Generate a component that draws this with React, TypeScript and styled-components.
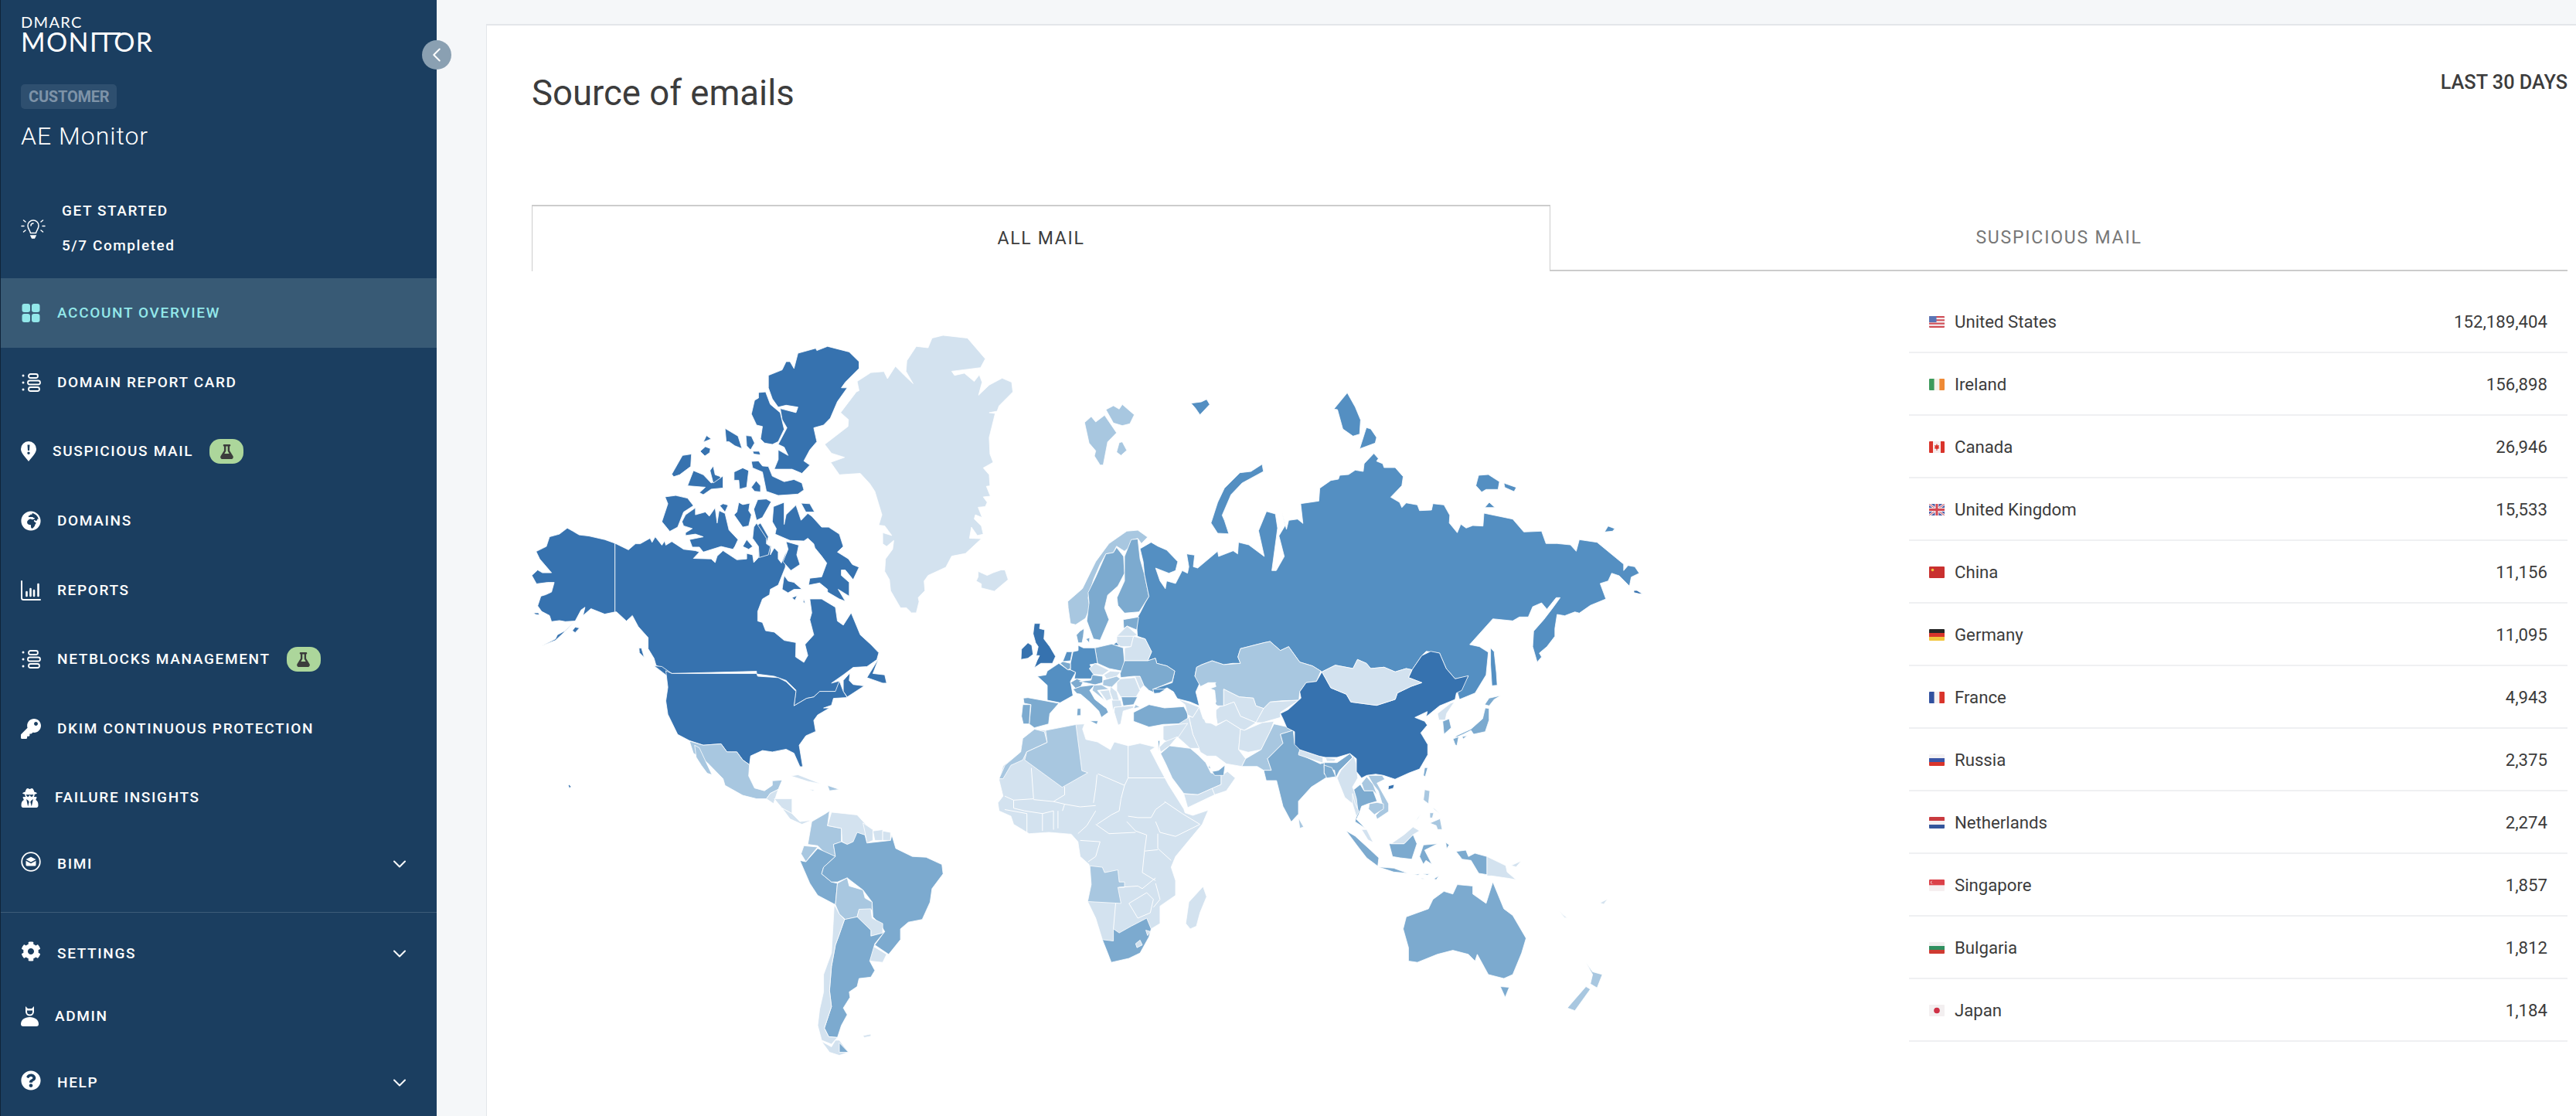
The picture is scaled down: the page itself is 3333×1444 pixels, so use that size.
import React from "react";
import styled, { createGlobalStyle } from "styled-components";
import { FaGlobeAfrica, FaKey, FaUserSecret, FaCog, FaQuestionCircle, FaFlask } from "react-icons/fa";
import { ChevronDown, ChevronLeft } from "lucide-react";

const GlobalStyle = createGlobalStyle`
  html, body { margin: 0; padding: 0; background: #f5f7f9; overflow: hidden; }
  * { box-sizing: border-box; }
  body { font-family: Roboto, "Liberation Sans", sans-serif; }
`;

const Page = styled.div`
  display: flex;
  width: 3333px;
  height: 1444px;
  overflow: hidden;
`;

const Sidebar = styled.aside`
  position: relative;
  flex: 0 0 565px;
  height: 1444px;
  background: #1b3e60;
  border-left: 1px solid #10243a;
  color: #fff;
`;

const LogoBlock = styled.div`
  padding: 21px 0 0 26px;
  height: 109px;
  font-family: Lato, sans-serif;
`;
const LogoTop = styled.div`
  font-size: 20px;
  line-height: 14px;
  letter-spacing: 1.3px;
  font-weight: 400;
`;
const LogoBottom = styled.div`
  position: relative;
  width: max-content;
  margin-top: 6px;
  font-size: 34px;
  line-height: 26px;
  letter-spacing: 1.4px;
  font-weight: 400;
  &::after {
    content: "";
    position: absolute;
    left: 93px;
    top: 1px;
    width: 36px;
    height: 3px;
    background: #fff;
  }
`;

const Collapse = styled.button`
  position: absolute;
  left: 545px;
  top: 52px;
  width: 38px;
  height: 38px;
  border: 0;
  padding: 0;
  border-radius: 50%;
  background: #8aa0b2;
  color: #fff;
  display: flex;
  align-items: center;
  justify-content: center;
  z-index: 2;
`;

const RoleBadge = styled.div`
  width: max-content;
  margin-left: 26px;
  height: 32px;
  padding: 0 10px;
  border-radius: 5px;
  background: #2e4f6f;
  color: #7e93a8;
  font-size: 20px;
  line-height: 32px;
  font-weight: 700;
  letter-spacing: -0.2px;
`;
const Account = styled.div`
  margin: 14px 0 0 26px;
  height: 43px;
  font-size: 32px;
  line-height: 43px;
  font-weight: 300;
  letter-spacing: 1px;
`;

const Started = styled.div`
  display: flex;
  align-items: center;
  gap: 21px;
  height: 129px;
  margin-top: 33px;
  padding-left: 26px;
`;
const StartedText = styled.div`
  display: flex;
  flex-direction: column;
  gap: 25px;
  font-size: 19px;
  line-height: 20px;
  font-weight: 500;
  letter-spacing: 1.55px;
`;

const NavItem = styled.div<{ $h?: number; $active?: boolean }>`
  display: flex;
  align-items: center;
  gap: 21px;
  height: ${(p) => p.$h ?? 89.6}px;
  padding: 0 34px 0 26px;
  background: ${(p) => (p.$active ? "#385a75" : "transparent")};
  color: ${(p) => (p.$active ? "#93e8ea" : "#fff")};
`;
const IconBox = styled.span<{ $w: number; $lift?: number }>`
  flex: 0 0 ${(p) => p.$w}px;
  width: ${(p) => p.$w}px;
  height: 26px;
  display: flex;
  align-items: center;
  justify-content: center;
  transform: translateY(${(p) => -(p.$lift ?? 0)}px);
  svg { display: block; }
`;
const NavLabel = styled.span`
  font-size: 19px;
  line-height: 24px;
  font-weight: 500;
  letter-spacing: 1.65px;
  white-space: nowrap;
`;
const Beta = styled.span`
  width: 44px;
  height: 32px;
  border-radius: 14px;
  background: #acd69b;
  color: #3c3c3c;
  display: flex;
  align-items: center;
  justify-content: center;
`;
const Chevron = styled.span`
  margin-left: auto;
  display: flex;
`;
const SideDivider = styled.hr`
  margin: 21px 0 13px;
  border: 0;
  border-top: 1px solid #3d5c78;
`;

const Main = styled.main`
  flex: 1;
  padding: 31px 0 0 64px;
  min-width: 0;
`;
const Card = styled.section`
  height: 1413px;
  background: #fff;
  border-left: 1px solid #e3e6ea;
  border-top: 2px solid #e3e6ea;
  padding: 0 11px 0 58px;
  overflow: hidden;
`;
const CardHead = styled.header`
  display: flex;
  justify-content: space-between;
  align-items: flex-start;
  height: 232px;
  color: #3c3c3c;
`;
const Title = styled.h1`
  margin: 60px 0 0;
  font-size: 45.5px;
  line-height: 56px;
  font-weight: 400;
`;
const Range = styled.div`
  margin-top: 59px;
  font-size: 25.3px;
  line-height: 30px;
  font-weight: 500;
`;
const Tabs = styled.div`
  display: flex;
  height: 86px;
`;
const Tab = styled.div<{ $active?: boolean }>`
  flex: ${(p) => (p.$active ? "0 0 1318px" : "1")};
  display: flex;
  align-items: center;
  justify-content: center;
  padding-bottom: ${(p) => (p.$active ? 2 : 0)}px;
  font-size: 23px;
  letter-spacing: ${(p) => (p.$active ? 1.7 : 1.8)}px;
  color: ${(p) => (p.$active ? "#3c3c3c" : "#777")};
  border-bottom: ${(p) => (p.$active ? "0" : "2px solid #ccc")};
  ${(p) => (p.$active ? "border: 1px solid #ccc; border-top-width: 2px; border-bottom: 0;" : "")}
`;
const Body = styled.div`
  display: flex;
  align-items: flex-start;
`;
const MapSvg = styled.svg`
  flex: 0 0 1782px;
  width: 1782px;
  height: 1060px;
`;
const List = styled.ul`
  flex: 1;
  list-style: none;
  margin: 25px 0 0;
  padding: 0;
`;
const Row = styled.li`
  display: flex;
  align-items: center;
  height: 81px;
  padding: 1px 26px 0;
  border-bottom: 2px solid #eff0f2;
  color: #3c3c3c;
  font-size: 22.2px;
`;
const RowName = styled.span`
  margin-left: 13px;
  flex: 1;
`;

/* ---------- icons ---------- */
const Bulb = () => (
  <svg width="32" height="26" viewBox="0 0 32 26" fill="none" stroke="#fff" strokeWidth="1.5" strokeLinecap="round">
    <path d="M12.5 18.5 C11.5 14.5 9 13 9 9 A7 7 0 0 1 23 9 C23 13 20.5 14.5 19.5 18.5 Z" />
    <path d="M13 9 A3 3 0 0 1 16 6" />
    <path d="M13 22 h6 l-1.5 3 h-3 Z" fill="#fff" />
    <path d="M1 9.5 h3 M28 9.5 h3 M3.5 2 l2.5 2 M28.500 2 l-2.500 2 M3.500 17 l2.500 -2 M28.500 17 l-2.500 -2" />
  </svg>
);
const Grid = () => (
  <svg width="24" height="24" viewBox="0 0 24 24" fill="currentColor">
    <rect x="0.500" y="0" width="10.500" height="11" rx="3" />
    <rect x="13" y="0" width="10.500" height="11" rx="3" />
    <rect x="0.500" y="13" width="10.500" height="11" rx="3" />
    <rect x="13" y="13" width="10.500" height="11" rx="3" />
  </svg>
);
const Stack = () => (
  <svg width="25" height="24" viewBox="0 0 25 24" fill="none" stroke="#fff" strokeWidth="1.800">
    <circle cx="2" cy="3" r="1.500" fill="#fff" stroke="none" />
    <circle cx="2" cy="12" r="1.500" fill="#fff" stroke="none" />
    <circle cx="2" cy="21" r="1.500" fill="#fff" stroke="none" />
    <rect x="9" y="1" width="12" height="5" rx="2.500" />
    <rect x="8" y="9.500" width="16" height="5" rx="2.500" />
    <rect x="9" y="18" width="14" height="5" rx="2.500" />
  </svg>
);
const Pin = () => (
  <svg width="20" height="26" viewBox="0 0 20 26">
    <path fillRule="evenodd" fill="#fff" d="M10 0 A10 10 0 0 1 20 10 C20 15 14 21 10 26 C6 21 0 15 0 10 A10 10 0 0 1 10 0 Z M8.500 4.500 L9 12 H11 L11.500 4.500 Z M10 13.500 A1.700 1.700 0 1 0 10 16.900 A1.700 1.700 0 1 0 10 13.500 Z" />
  </svg>
);
const Chart = () => (
  <svg width="26" height="26" viewBox="0 0 26 26" fill="none" stroke="#fff" strokeLinecap="round">
    <path d="M1 1 V22.500 Q1 25 3.500 25 H25" strokeWidth="2" />
    <path d="M7.500 15 V20 M12.500 11 V20 M17 13 V20 M22.500 5 V20" strokeWidth="2.600" />
  </svg>
);
const Bimi = () => (
  <svg width="26" height="26" viewBox="0 0 26 26">
    <circle cx="13" cy="13" r="11.800" fill="none" stroke="#fff" strokeWidth="1.800" />
    <path fill="#fff" d="M6.500 10 L13 6.800 L19.500 10 L13 13.500 Z" />
    <path fill="#fff" d="M6.500 11.800 L13 15.300 L19.500 11.800 V17 Q19.500 18.500 18 18.500 H8 Q6.500 18.500 6.500 17 Z" />
  </svg>
);
const Admin = () => (
  <svg width="23" height="26" viewBox="0 0 23 26" fill="#fff">
    <path d="M6 0 L9 3 H14 L17 0 V7 A5.500 5.500 0 0 1 6 7 Z M8 5.500 V7 A3.500 3.500 0 0 0 15 7 V5.500 Z" fillRule="evenodd" />
    <path d="M11.500 14 C18 14 23 17.500 23 23 Q23 26 20 26 H3 Q0 26 0 23 C0 17.500 5 14 11.500 14 Z" />
  </svg>
);

const FlagShape = styled.svg`
  flex: 0 0 20px;
  width: 20px;
  height: 15px;
  border-radius: 1px;
`;
const Flag = ({ code }: { code: string }) => {
  const stripes = (cols: string[], vertical = false) =>
    cols.map((c, i) =>
      vertical ? (
        <rect key={i} x={(i * 20) / cols.length} y={0} width={20 / cols.length + 0.2} height={15} fill={c} />
      ) : (
        <rect key={i} x={0} y={(i * 15) / cols.length} width={20} height={15 / cols.length + 0.2} fill={c} />
      )
    );
  let inner: React.ReactNode = null;
  if (code === "us")
    inner = (
      <>
        {stripes(["#cf4b54", "#f3eef0", "#cf4b54", "#f3eef0", "#cf4b54", "#f3eef0", "#cf4b54"])}
        <rect width="9.500" height="8" fill="#5a74b5" />
      </>
    );
  if (code === "ie") inner = stripes(["#3c9a5b", "#f5f1ea", "#ef8a35"], true);
  if (code === "ca")
    inner = (
      <>
        {stripes(["#d9342b", "#f6eeee", "#f6eeee", "#d9342b"], true)}
        <path d="M10 3 L11 5.500 L13 5 L12.300 8 L13.500 9 L10.500 10 V12 H9.500 V10 L6.500 9 L7.700 8 L7 5 L9 5.500 Z" fill="#d9342b" />
      </>
    );
  if (code === "gb")
    inner = (
      <>
        <rect width="20" height="15" fill="#4a5ea8" />
        <path d="M0 0 L20 15 M20 0 L0 15" stroke="#f3eef0" strokeWidth="3" />
        <path d="M0 0 L20 15 M20 0 L0 15" stroke="#d34a55" strokeWidth="1" />
        <path d="M10 0 V15 M0 7.500 H20" stroke="#f3eef0" strokeWidth="5" />
        <path d="M10 0 V15 M0 7.500 H20" stroke="#d34a55" strokeWidth="3" />
      </>
    );
  if (code === "cn")
    inner = (
      <>
        <rect width="20" height="15" fill="#c9302f" />
        <circle cx="4.500" cy="4.500" r="1.800" fill="#f0c43c" />
      </>
    );
  if (code === "de") inner = stripes(["#262626", "#d9342b", "#f2c53d"]);
  if (code === "fr") inner = stripes(["#30509f", "#f5f1f1", "#d9342b"], true);
  if (code === "ru") inner = stripes(["#f3f1f3", "#3a55a6", "#d9342b"]);
  if (code === "nl") inner = stripes(["#c93a3f", "#f4f0f2", "#33559c"]);
  if (code === "sg")
    inner = (
      <>
        {stripes(["#db4148", "#f6eff0"])}
        <circle cx="4" cy="3.700" r="2" fill="#f6eff0" />
        <circle cx="4.800" cy="3.700" r="2" fill="#db4148" />
      </>
    );
  if (code === "bg") inner = stripes(["#f0eeee", "#2f8f5f", "#cf3b32"]);
  if (code === "jp")
    inner = (
      <>
        <rect width="20" height="15" fill="#f3eff0" />
        <circle cx="10" cy="7.500" r="3.800" fill="#cf3146" />
      </>
    );
  return (
    <FlagShape viewBox="0 0 20 15" aria-hidden>
      {inner}
    </FlagShape>
  );
};

/* ---------- map ---------- */
const region = (ox: number, oy: number, sx: number, sy: number) => (s: string) =>
  s
    .trim()
    .split(/\s+/)
    .map((p) => {
      const [x, y] = p.split(",").map(Number);
      return `${(ox + x / sx).toFixed(1)},${(oy + y / sy).toFixed(1)}`;
    })
    .join(" ");
const z5 = region(660, 400, 1.96, 2.8);
const z6 = region(1300, 440, 1.742, 3);
const z7 = region(660, 900, 1.96, 2.882);
const z8 = region(1300, 900, 1.742, 2.882);
const z10 = region(1310, 780, 3, 3);
const z11 = region(1560, 900, 3, 3);

const C1 = "#3672af";
const C2 = "#548fc2";
const C3 = "#7caacf";
const C4 = "#a8c7e0";
const C5 = "#d3e2ef";

const lands: [string, string][] = [
  /* Canada + Alaska */
  [C1, z5("266,848 240,835 200,822 175,818 160,805 145,793 125,815 100,825 92,860 66,878 75,905 90,930 105,955 82,955 70,945 55,965 67,995 95,990 112,990 105,1025 90,1035 78,1040 70,1075 80,1095 100,1110 105,1132 125,1128 140,1132 165,1130 140,1165 120,1180 115,1195 80,1220 115,1200 130,1180 145,1160 165,1130 180,1090 190,1080 185,1110 205,1085 240,1105 266,1097")],
  [C1, z5("60,1100 72,1100 74,1108 64,1106")],
  [C1, z5("165,1152 176,1155 165,1172 158,1165")],
  [C1, z5("266,848 300,872 318,850 330,850 355,830 360,845 368,825 385,855 392,840 395,855 410,842 440,870 470,875 480,880 465,903 510,905 520,918 525,895 540,875 575,908 600,905 600,885 615,890 618,918 630,900 630,860 615,830 620,790 635,775 655,825 650,850 662,860 660,890 670,865 680,880 680,905 688,920 700,880 698,935 680,1000 660,1015 658,1035 640,1050 628,1095 628,1130 640,1135 648,1165 670,1170 695,1200 725,1208 724,1260 745,1280 755,1255 748,1215 770,1180 760,1125 765,1100 760,1050 790,1050 825,1080 830,1130 845,1145 865,1100 888,1180 915,1215 935,1245 930,1270 905,1295 870,1298 845,1325 815,1355 835,1347 845,1385 825,1385 785,1385 770,1405 752,1410 720,1437 725,1380 700,1345 670,1330 625,1322 625,1312 410,1320 395,1310 370,1290 365,1265 350,1230 350,1190 325,1150 310,1110 295,1130 270,1097 266,1097")],
  [C1, z5("935,1265 905,1335 945,1355 955,1355 950,1325 920,1320")],
  [C1, z5("845,1345 862,1318 860,1345 870,1360 898,1365 855,1405 845,1385")],
  [C1, z5("365,1292 385,1295 410,1320 410,1350 395,1325")],
  [C1, z5("327,1228 333,1228 340,1262 328,1245")],
  [C1, z5("720,215 730,160 775,142 778,150 805,135 860,155 885,190 885,215 850,265 840,285 855,285 830,335 812,395 795,420 770,430 778,480 760,510 745,550 760,565 740,595 715,580 670,580 680,545 680,510 705,530 695,500 680,490 702,430 690,400 685,360 725,375 730,355 700,348 680,355 665,325 655,285 655,240 690,220 700,190 710,190")],
  [C1, z5("630,302 648,300 660,345 685,375 690,405 695,435 680,480 665,490 645,485 635,470 640,425 625,420 612,380 620,330 630,322")],
  [C1, z5("545,432 578,460 588,505 570,495 555,480 548,480")],
  [C1, z5("598,458 612,460 620,485 610,510 600,495")],
  [C1, z5("498,458 510,470 490,482")],
  [C1, z5("495,498 508,505 506,520 494,532 482,515")],
  [C1, z5("615,515 632,515 635,528 618,525")],
  [C1, z5("437,530 460,525 458,570 430,600 415,607 410,598")],
  [C1, z5("465,585 490,600 510,630 540,605 540,648 510,652 490,672 480,665 495,645 450,640")],
  [C1, z5("515,568 520,600 530,605 535,610 515,630 507,585")],
  [C1, z5("568,590 590,575 605,585 600,645 582,652 580,620 568,620")],
  [C1, z5("612,552 630,550 640,568 655,570 665,605 695,625 720,617 740,630 745,655 730,670 680,675 650,660 640,590 615,575")],
  [C1, z5("624,622 635,640 635,662 620,660 612,645")],
  [C1, z5("393,680 420,675 450,685 465,712 440,735 425,790 405,805 385,770 400,705")],
  [C1, z5("470,720 470,745 495,735 505,750 520,720 525,775 530,730 545,740 555,800 578,835 570,860 565,870 535,860 490,880 480,862 462,862 455,835 490,825 470,815 445,820 445,810 462,795 440,785 436,770 445,745")],
  [C1, z5("540,705 553,710 545,735 532,712")],
  [C1, z5("580,700 590,708 608,703 605,730 612,745 605,785 590,790 568,745 575,735")],
  [C1, z5("628,690 650,688 662,698 640,755 625,765 618,725")],
  [C1, z5("695,700 668,715 665,770 675,795 672,815 710,838 745,840 755,830 770,850 773,865 790,895 803,920 790,970 760,975 757,1000 785,992 805,1015 805,1025 835,1050 850,1058 832,1015 860,1040 860,990 840,965 840,945 850,945 870,980 885,935 868,925 858,905 830,880 845,860 835,815 808,790 790,790 765,750 755,740 738,765 725,710 700,745 695,780")],
  ["#fff", z5("775,890 782,910 775,925 765,910")],
  [C1, z5("700,842 732,855 727,890 735,925 712,947 692,915 705,870")],
  [C1, z5("738,703 760,705 772,735 750,735")],
  [C1, z5("625,775 650,830 650,850 660,860 655,890 632,900 630,860 615,830 618,790")],
  [C1, z5("600,835 615,860 605,870 590,860")],
  [C1, z5("695,965 705,985 720,990 740,1015 720,1015 705,1028 690,1015")],
  [C1, z5("715,1045 728,1038 722,1055")],
  [C1, z5("745,1050 748,1065 743,1062")],
  [C5, z5("1070,105 1098,95 1160,105 1205,180 1193,212 1120,225 1127,240 1152,232 1177,262 1190,238 1197,265 1188,312 1215,275 1248,250 1272,265 1275,300 1240,350 1235,370 1215,375 1230,378 1215,465 1217,525 1225,555 1200,575 1215,600 1217,640 1208,642 1218,678 1200,680 1210,700 1205,715 1187,718 1197,755 1180,745 1177,760 1195,785 1200,815 1185,820 1170,790 1165,830 1195,832 1155,885 1120,895 1105,935 1060,965 1050,985 1052,1020 1035,1045 1037,1060 1030,1100 1018,1100 1005,1082 990,1082 965,1020 962,980 950,950 952,905 970,870 973,838 955,860 945,850 945,810 968,820 950,785 935,783 943,745 925,660 912,632 888,595 835,600 813,555 848,537 815,522 798,490 857,425 858,400 838,375 878,300 885,295 880,262 915,230 948,226 957,252 977,207 1000,240 1022,270 1004,225 1006,187 1030,135 1060,140")],
  [C5, z5("1187,950 1210,965 1225,955 1245,945 1255,945 1263,980 1228,1022 1195,1010 1195,995 1182,985 1187,970")],
  /* USA */
  [C1, z5("410,1320 625,1320 628,1330 680,1335 700,1350 725,1385 720,1437 752,1410 770,1405 785,1385 825,1385 835,1347 845,1385 855,1407 820,1410 815,1435 795,1445 810,1445 780,1470 770,1490 775,1530") + " " + z7("750,150 733,185 742,265 735,265 720,215 700,200 665,210 640,205 610,225 607,258 590,240 575,210 562,210 550,210 535,180 490,185 455,168 425,145 400,70 395,20") + " " + z5("400,1370 395,1310")],
  [C1, z7("150,332 155,340 150,345 148,335")],
  /* Central America */
  [C4, z7("455,170 490,185 535,180 550,210 575,210 590,240 607,258 605,300 620,345 645,355 665,335 665,318 690,315 680,350 660,365 650,385 625,385 590,372 545,335 540,310 500,250 465,215")],
  [C4, z7("468,185 480,195 512,295 500,290 485,260 472,230")],
  [C5, z7("650,385 660,365 680,350 672,385 668,403")],
  [C5, z7("670,385 715,385 715,440 690,420")],
  [C5, z7("690,420 715,440 735,470 765,465 740,480 710,460")],
  [C5, z7("712,300 730,295 790,330 755,320")],
  [C4, z7("805,335 835,350 810,355")],
  [C5, z7("758,350 772,352 768,356")],
  /* South America */
  [C4, z7("800,440 810,430 805,485 840,495 840,545 820,555 825,600 800,590 780,560 755,555 765,470")],
  [C5, z7("815,435 880,445 905,485 920,510 900,520 870,545 855,555 842,545 840,495 805,485")],
  [C5, z7("895,475 920,500 920,540 905,550 900,510")],
  [C5, z7("920,505 945,500 945,540 925,540")],
  [C5, z7("945,505 965,510 965,540 945,540")],
  [C4, z7("745,560 780,565 760,600 750,620 738,590")],
  [C3, z7("735,615 750,620 780,570 825,600 795,640 790,665 815,695 830,700 825,780 780,745 760,700")],
  [C3, z7("880,510 900,520 905,550 965,540 968,520 978,570 1020,600 1055,603 1095,630 1098,665 1070,720 1065,770 1045,835 1010,845 990,870 990,910 960,965 925,930 950,880 940,855 920,825 918,770 895,725 855,680 830,695 815,695 790,665 795,640 825,600 820,555 840,545 855,555 870,545")],
  [C4, z7("830,700 855,680 860,710 895,725 900,755 918,770 918,800 885,800 880,825 850,835 835,815 825,780")],
  [C5, z7("885,797 915,795 918,830 945,850 945,885 915,897 915,875 880,825")],
  [C5, z7("918,932 955,965 945,995 912,990")],
  [C3, z7("848,835 880,825 915,875 915,897 945,885 950,880 925,925 912,990 925,1025 915,1050 885,1055 880,1085 860,1105 862,1125 845,1165 855,1190 840,1230 830,1275 808,1272 797,1240 815,1160 810,1100 815,1010 825,930 835,890")],
  [C5, z7("822,780 835,815 848,835 835,890 825,930 815,1010 810,1100 815,1160 797,1240 808,1272 830,1275 815,1300 790,1285 780,1230 785,1170 795,1105 795,1040 815,960")],
  [C5, z7("790,1290 815,1310 825,1285 835,1285 858,1330 835,1342 810,1330")],
  [C3, z7("835,1295 858,1330 835,1330")],
  [C5, z7("895,1268 915,1262 915,1270 898,1275")],
  /* Africa base */
  [C5, z7("1240,315 1250,262 1295,210 1300,160 1330,125") + " " + z10("130,495 245,472 280,470 272,490 285,530 330,540 380,570 395,540 450,555 495,545 555,560 535,572 570,640 605,705 665,800 670,815 700,825 760,805") + " " + z8("445,480 405,560 385,600 375,640 385,690 385,745 350,785 350,850 330,870 325,900 305,960 280,980 240,995 232,960 220,910 205,830 187,768 195,700 190,630 170,600 165,545 150,517 100,510 55,515 20,480") + " " + z7("1270,450 1240,430 1237,400 1250,375")],
  [C4, z7("1330,125 1355,135 1362,175 1310,210 1300,240 1270,260 1250,310 1240,310 1255,260 1295,210 1300,160")],
  [C4, z7("1358,130 1435,108 1450,280 1465,288 1400,342 1305,240 1310,210 1362,175")],
  [C3, z8("220,910 245,915 245,870 258,885 285,860 320,830 330,870 325,900 305,960 280,980 240,995 232,960")],
  [C5, z8("295,925 305,912 310,930 298,940")],
  [C5, z8("318,875 328,880 322,895")],
  [C4, z8("192,635 220,640 225,660 255,650 258,695 270,695 270,715 255,715 262,775 187,768 195,705")],
  [C5, z8("447,712 455,750 440,810 432,860 418,870 408,850 415,770")],
  /* Nordics */
  [C4, z6("275,742 300,738 322,765 308,790 300,770 288,775 283,800 270,820 252,800 245,825 228,830 215,870 200,930 188,1000 192,1040 182,1080 160,1105 148,1100 143,1040 142,1015 175,965 205,860 235,790")],
  [C4, z6("180,320 195,297 205,318 225,292 252,360 232,395 222,485 215,485 202,450 205,430 190,400")],
  [C4, z6("228,270 245,255 258,268 265,250 292,290 282,325 265,332 245,322")],
  [C4, z6("258,398 265,395 275,428 262,448 252,435")],
  [C3, z6("252,805 268,840 270,905 255,955 232,990 225,1040 235,1085 215,1165 200,1160 185,1090 190,1020 188,980 205,920 228,830 245,825")],
  [C3, z6("285,775 300,772 305,850 315,910 325,995 303,1055 270,1060 255,1030 253,1000 270,935 270,840")],
  /* Russia */
  [C2, z6("305,810 330,785 345,800 365,815 390,860 385,895 370,905 340,885 350,935 362,965 365,935 385,945 400,895 412,905 415,880 410,830 428,835 425,880 435,885 480,820 482,840 515,818 525,830 527,785 550,795 585,840 572,740 590,665 610,675 615,730 602,895 612,895 630,840 618,760 632,720 625,670 635,735 640,700 660,695 672,712 667,635 708,625 710,575 735,545 752,540 755,525 775,522 790,505 808,510 810,480 832,440 842,460 838,470 852,480 855,495 880,495 898,530 895,565 870,610 890,630 895,650 905,632 930,640 935,662 962,660 965,635 990,640 1003,680 1002,710 1020,748 1028,715 1040,730 1055,720 1078,722 1080,672 1145,695 1170,745 1210,742 1220,790 1245,790 1275,795 1288,820 1295,775 1335,785 1395,870 1395,895 1405,875 1420,880 1430,905 1412,920 1408,955 1385,915 1368,905 1360,935 1342,945 1355,1005 1320,1030 1295,1060 1285,1055 1262,1070 1245,1065 1240,1120 1240,1150 1222,1190 1205,1215 1210,1230 1200,1250 1190,1190 1192,1130 1215,1085 1235,1040 1252,1000 1243,1000 1222,1045 1210,1020 1190,1035 1180,1075 1160,1075 1145,1090 1100,1082 1048,1182 1070,1190 1090,1212 1085,1300 1060,1370 1025,1395 1020,1365 1045,1305 1015,1315 995,1275 980,1215 950,1208 940,1225 918,1280 905,1275 880,1288 855,1270 825,1275 815,1255 795,1240 785,1275 745,1262 715,1288") + " " + z10("1165,245 1115,230 1072,170 1040,185 1000,150 975,155 885,178 875,210 885,235 855,235 820,240 775,225 735,240 715,250 708,285 730,305 712,345 725,400 690,385 640,372 625,345 600,330 580,340 545,335 575,325 620,310 630,265 600,245 560,235 555,215 525,225 540,190 515,140 485,130 480,65 495,40 515,0") + " " + z6("325,995 315,910 312,860")],
  [C2, z10("388,165 405,152 420,165")],
  [C2, z6("580,482 583,510 535,555 510,600 490,680 495,700 505,752 480,750 465,710 480,630 495,575 530,515 555,510")],
  [C2, z6("420,245 443,240 455,230 462,250 440,290 430,265")],
  [C2, z6("772,205 790,260 802,310 800,365 785,373 762,345 750,270 742,268")],
  [C2, z6("815,340 825,345 838,378 835,400 800,422")],
  [C2, z6("1068,525 1090,522 1115,550 1112,580 1085,580 1075,590 1062,565")],
  [C2, z6("1125,555 1153,572 1148,588 1127,572")],
  [C2, z6("1092,630 1105,650 1082,650")],
  [C2, z6("1360,722 1375,732 1370,742 1352,745")],
  [C1, z6("1418,972 1425,972 1437,985 1430,985 1418,980")],
  [C2, z6("1095,1195 1103,1210 1108,1290 1110,1340 1098,1342 1095,1260")],
  /* Europe */
  [C3, z10("430,65 490,55 482,105 445,90 432,100")],
  [C5, z10("405,130 445,90 485,125 470,130")],
  [C5, z10("405,130 470,130 460,170 420,170 405,155")],
  [C5, z10("470,130 515,140 540,190 525,225 435,225 435,175 460,170")],
  [C3, z10("320,175 385,160 430,175 435,235 425,265 375,255 330,235")],
  [C2, z10("255,165 275,175 320,175 330,235 300,240 320,270 305,295 240,295 245,270 225,260 225,235 235,190 255,185")],
  [C3, z10("262,110 278,100 275,130 270,155 255,155 248,125")],
  [C3, z10("285,140 300,135 298,155")],
  [C2, z10("210,190 232,190 225,225 195,228")],
  [C3, z10("185,235 195,228 225,235 225,255 215,260")],
  [C2, z10("180,235 215,260 225,260 245,270 225,305 235,360 185,388 135,378 135,320 97,285 130,280 135,265")],
  [C3, z10("42,370 60,368 180,390 145,430 140,470 85,485 65,470 72,395 45,390")],
  [C3, z10("40,395 70,395 65,470 42,470 35,440")],
  [C1, z10("85,80 108,80 105,100 125,105 122,140 145,170 167,208 155,235 110,235 85,252 95,225 105,205 92,205 100,170 90,155 80,120")],
  [C1, z10("60,155 75,165 80,200 60,215 33,220 35,180")],
  [C3, z10("225,310 250,295 275,305 265,325 245,332")],
  [C5, z10("298,255 320,235 375,262 350,280 315,278")],
  [C5, z10("355,280 380,265 420,268 405,285 365,295")],
  [C3, z10("260,305 305,300 310,280 350,285 350,310 320,318")],
  [C4, z10("352,300 405,285 418,295 385,328 350,320")],
  [C3, z10("235,335 265,325 320,318 300,340 320,375 365,410 372,425 345,445 335,420 300,385 265,355 250,352")],
  [C3, z10("300,458 332,458 328,472")],
  [C3, z10("252,410 265,410 265,437 250,438")],
  [C4, z10("315,320 345,318 375,335 330,340 360,380 310,340")],
  [C5, z10("338,342 375,338 385,372 365,380")],
  [C5, z10("380,325 405,345 415,380 390,378 378,345")],
  [C5, z10("405,310 420,295 475,290 495,340 480,365 420,365 405,340")],
  [C5, z10("475,285 495,285 510,320 495,335")],
  [C3, z10("435,225 525,225 555,215 560,235 600,245 630,265 620,305 580,322 545,335 555,350 530,340 510,320 495,285 470,285 420,290 418,275")],
  [C2, z10("545,335 580,335 595,335 570,350 550,352")],
  [C3, z10("422,365 485,365 470,395 430,400")],
  [C5, z10("395,405 430,402 470,400 470,408 430,420 420,470 410,475 395,425")],
  [C5, z10("385,378 420,378 425,402 395,405 390,420")],
  [C3, z10("470,425 530,395 590,408 665,403 680,430 680,468 585,472 530,482 470,460")],
  [C4, z10("478,395 495,405 470,410")],
  /* Middle East, Central Asia */
  [C5, z10("640,372 725,405 700,445 680,435 670,395")],
  [C5, z10("685,440 700,445 725,405 740,450 790,478 830,455 885,490 878,570 905,605 890,635 830,625 790,595 755,595 730,580 700,510")],
  [C5, z10("645,470 685,445 700,510 725,565 690,565 640,520")],
  [C5, z10("585,478 680,468 645,520 600,540 585,530")],
  [C5, z10("590,540 640,520 610,555 575,580 570,560")],
  [C3, z10("565,535 572,535 567,575")],
  [C4, z10("575,585 610,555 690,565 720,590 750,620 770,660 810,670 810,705 720,745 665,740 620,680 595,625")],
  [C5, z10("665,742 720,745 775,720 785,745 680,795")],
  [C5, z10("810,670 835,655 865,680 830,730 785,745 775,720 810,705")],
  [C3, z10("775,655 800,650 825,630 820,670 785,670")],
  [C4, z10("765,630 770,645 760,640")],
  [C4, z10("715,250 735,240 775,225 820,240 885,235 875,210 885,178 975,155 1000,150 1040,185 1072,170 1115,230 1165,245 1197,265 1180,305 1140,310 1115,345 1112,378 1045,380 1000,385 975,410 945,400 935,370 880,365 820,335 820,400 780,400 790,385 785,340 760,330 790,310 760,310 730,325 708,285")],
  [C5, z10("820,335 880,365 935,370 945,400 975,410 945,465 885,440 860,385 820,400")],
  [C5, z10("790,405 820,400 860,385 885,440 945,465 900,495 885,490 830,455 795,472 790,440")],
  [C5, z10("975,410 1000,385 1112,378 1040,425 1040,445 970,465 945,465")],
  [C5, z10("885,490 900,495 970,465 1015,460 1000,500 965,570 915,580 878,570")],
  ["#fff", z10("712,345 745,320 785,310 790,325 760,335 775,365 790,395 803,405 785,420 795,470 750,465 740,440 735,410 728,395")],
  [C4, z10("1015,470 1060,480 1090,495 1040,510 1050,545 990,605 1005,650 975,650 950,635 890,635 905,605 965,570 1000,500")],
  [C3, z10("1040,510 1090,495 1095,545 1120,570 1110,585 1195,625 1210,620 1210,665 1255,655 1215,680 1160,715 1110,770 1110,820 1082,850 1050,790 1025,690 985,690 975,650 1005,650 990,605 1050,545")],
  [C5, z10("1115,570 1205,600 1205,622 1110,590")],
  [C5, z10("1215,600 1255,605 1250,615 1220,615")],
  [C3, z10("1210,620 1260,620 1310,585 1320,600 1270,650 1255,680 1250,650 1210,640")],
  [C3, z10("1210,630 1240,640 1255,675 1220,680 1210,660")],
  [C5, z10("1275,650 1325,595 1335,625 1340,680 1320,715 1330,740 1345,800 1290,755 1260,680")],
  /* China, Mongolia, East Asia */
  [C1, z6("715,1288 735,1350 770,1375 780,1405 838,1418 880,1395 885,1370 915,1345 940,1330 910,1310 918,1280 940,1225 960,1208 980,1215 995,1275 1015,1315 1045,1303 1030,1360 1018,1370 1015,1395 980,1420 950,1462") + " " + z11("860,62 812,85 850,100 860,115 835,145 862,190 862,230 830,285 790,300 735,325 690,310 660,305 625,310 605,320 585,295 585,245 560,225 510,240 465,240 440,235 365,210 345,190 345,140 315,125 300,90 290,70 320,55 370,10") + " " + z10("1115,345 1140,310 1180,305")],
  [C1, z11("710,350 732,345 728,360 708,365")],
  [C3, z11("850,280 862,280 852,315 845,310")],
  [C5, z6("715,1288 745,1262 785,1275 795,1240 815,1255 825,1275 855,1270 880,1288 905,1275 918,1280 910,1310 940,1330 915,1345 885,1370 880,1395 838,1418 780,1405 770,1375 735,1350")],
  [C5, z11("950,30 965,25 935,70 930,95 905,95 900,70")],
  [C3, z11("920,100 945,90 953,125 925,150")],
  [C3, z11("1085,48 1100,50 1100,95 1085,140 1040,150 1030,135 1000,150 965,165 975,155 1030,130 1075,90")],
  [C3, z11("960,168 982,160 975,195 968,190")],
  [C3, z11("995,160 1015,155 1000,168")],
  [C3, z11("1100,10 1145,0 1120,15 1100,40 1083,35")],
  [C4, z11("630,310 685,310 695,325 665,340 710,420 710,450 665,480 660,465 690,435 670,370 650,345")],
  [C4, z11("605,340 625,315 650,345 665,385 650,370 615,370")],
  [C3, z11("575,365 600,345 615,370 650,370 665,410 630,420 605,430 595,460 585,480 620,515 580,490 590,440 585,400")],
  [C4, z11("635,420 665,415 690,420 690,440 655,462 632,440")],
  [C5, z11("605,520 625,520 650,570 630,560")],
  [C5, z11("570,380 580,420 595,450 585,470 570,420")],
  [C3, z11("545,525 580,545 640,600 672,630 668,662 625,630 590,585")],
  [C3, z11("670,665 730,670 785,690 730,685")],
  [C3, z11("805,695 830,692 825,697")],
  [C3, z11("842,692 870,692 860,697")],
  [C3, z11("835,708 850,712 840,712")],
  [C3, z11("885,712 905,700 895,715")],
  [C3, z11("712,575 770,575 805,540 820,575 800,635 755,630 725,625")],
  [C5, z11("720,575 770,540 805,510 830,525 805,540 770,575")],
  [C3, z11("845,580 900,575 850,600 878,655 855,640 845,655 830,625")],
  [C3, z11("932,570 945,580 935,595")],
  [C3, z11("972,605 1010,600 1020,625 1045,612 1092,625 1092,695 1060,690 1030,640 995,635")],
  [C5, z11("1092,625 1165,660 1170,685 1205,715 1180,710 1110,700 1092,700")],
  [C5, z11("1185,660 1225,642 1205,665")],
  [C5, z11("1375,840 1400,862 1395,865")],
  [C5, z11("1530,805 1560,790 1545,810")],
  [C4, z11("850,365 870,370 865,420 845,405")],
  [C4, z11("870,455 885,455 880,475 870,475")],
  [C4, z11("870,495 910,478 918,520 900,520 895,505")],
  [C4, z11("850,420 890,440 908,460 880,435")],
  [C5, z11("815,485 835,460 825,478")],
  [C4, z11("360,475 380,510 365,515")],
  /* Australia, NZ */
  [C3, z8("1100,695 1110,735 1125,795 1145,820 1175,905 1165,960 1145,1040 1125,1055 1090,1040 1065,965 1060,990 1045,965 1010,950 975,965 930,995 910,990 910,940 898,870 905,825 955,795 965,760 990,730 1010,740 1020,705 1055,710 1055,740 1085,775")],
  [C3, z8("1117,1085 1137,1088 1128,1125")],
  [C4, z8("1310,995 1325,1030 1347,1040 1335,1090 1320,1075 1325,1040")],
  [C4, z8("1310,1085 1320,1095 1285,1175 1268,1165")],
  [C5, z8("1250,805 1268,830 1262,828")],
];

const africaLines: string[] = [
  z8("60,270 65,385 20,390 0,375"),
  z8("135,340 135,370 110,395 65,388"),
  z8("208,295 205,345 200,400"),
  z8("135,405 170,415 205,410"),
  z8("205,430 185,485 165,515"),
  z8("278,185 278,307 270,335 262,385 258,430 240,445 208,480"),
  z8("278,307 362,307"),
  z8("210,292 270,335"),
  z8("278,450 300,455 330,455 340,425 362,398"),
  z8("360,395 400,440 440,480"),
  z8("340,470 350,510 385,525 440,480"),
  z8("275,470 295,505 320,520"),
  z8("205,480 235,515 295,510"),
  z8("170,540 215,545 205,600 188,620"),
  z8("320,520 315,580 310,660 340,690"),
  z8("345,515 345,570 375,615"),
  z8("315,580 345,575"),
  z8("258,715 300,710 310,720 340,680"),
  z8("250,775 245,870"),
  z8("280,775 300,830"),
  z8("280,775 320,735 335,760 328,810 300,830"),
  z8("340,700 350,760 335,790"),
  z8("20,390 20,420 45,430 85,440 110,430 110,500"),
  z8("85,440 85,505"),
  z8("120,430 120,495"),
  z8("130,430 135,405 110,395"),
  z8("0,425 50,440 50,510"),
];

const countries: [string, string, string][] = [
  ["us", "United States", "152,189,404"],
  ["ie", "Ireland", "156,898"],
  ["ca", "Canada", "26,946"],
  ["gb", "United Kingdom", "15,533"],
  ["cn", "China", "11,156"],
  ["de", "Germany", "11,095"],
  ["fr", "France", "4,943"],
  ["ru", "Russia", "2,375"],
  ["nl", "Netherlands", "2,274"],
  ["sg", "Singapore", "1,857"],
  ["bg", "Bulgaria", "1,812"],
  ["jp", "Japan", "1,184"],
];

const Flask = () => <FaFlask size={19} />;
const Down = () => (
  <Chevron>
    <ChevronDown size={28} strokeWidth={1.700} color="#fff" />
  </Chevron>
);

export default function App() {
  return (
    <Page>
      <GlobalStyle />
      <Sidebar>
        <LogoBlock>
          <LogoTop>DMARC</LogoTop>
          <LogoBottom>MONITOR</LogoBottom>
        </LogoBlock>
        <Collapse aria-label="Collapse">
          <ChevronLeft size={30} strokeWidth={1.600} />
        </Collapse>
        <RoleBadge>CUSTOMER</RoleBadge>
        <Account>AE Monitor</Account>
        <Started>
          <IconBox $w={32}>
            <Bulb />
          </IconBox>
          <StartedText>
            <span>GET STARTED</span>
            <span>5/7 Completed</span>
          </StartedText>
        </Started>
        <NavItem $active $h={90}>
          <IconBox $w={26}>
            <Grid />
          </IconBox>
          <NavLabel>ACCOUNT OVERVIEW</NavLabel>
        </NavItem>
        <NavItem>
          <IconBox $w={26}>
            <Stack />
          </IconBox>
          <NavLabel>DOMAIN REPORT CARD</NavLabel>
        </NavItem>
        <NavItem>
          <IconBox $w={20}>
            <Pin />
          </IconBox>
          <NavLabel>SUSPICIOUS MAIL</NavLabel>
          <Beta>
            <Flask />
          </Beta>
        </NavItem>
        <NavItem>
          <IconBox $w={26}>
            <FaGlobeAfrica size={26} />
          </IconBox>
          <NavLabel>DOMAINS</NavLabel>
        </NavItem>
        <NavItem>
          <IconBox $w={26}>
            <Chart />
          </IconBox>
          <NavLabel>REPORTS</NavLabel>
        </NavItem>
        <NavItem>
          <IconBox $w={26}>
            <Stack />
          </IconBox>
          <NavLabel>NETBLOCKS MANAGEMENT</NavLabel>
          <Beta>
            <Flask />
          </Beta>
        </NavItem>
        <NavItem>
          <IconBox $w={26}>
            <FaKey size={26} />
          </IconBox>
          <NavLabel>DKIM CONTINUOUS PROTECTION</NavLabel>
        </NavItem>
        <NavItem>
          <IconBox $w={23}>
            <FaUserSecret size={25} />
          </IconBox>
          <NavLabel>FAILURE INSIGHTS</NavLabel>
        </NavItem>
        <NavItem $h={82}>
          <IconBox $w={26} $lift={3}>
            <Bimi />
          </IconBox>
          <NavLabel>BIMI</NavLabel>
          <Down />
        </NavItem>
        <SideDivider />
        <NavItem $h={80}>
          <IconBox $w={26} $lift={3}>
            <FaCog size={26} />
          </IconBox>
          <NavLabel>SETTINGS</NavLabel>
          <Down />
        </NavItem>
        <NavItem $h={81}>
          <IconBox $w={23}>
            <Admin />
          </IconBox>
          <NavLabel>ADMIN</NavLabel>
        </NavItem>
        <NavItem $h={92}>
          <IconBox $w={26} $lift={3}>
            <FaQuestionCircle size={26} />
          </IconBox>
          <NavLabel>HELP</NavLabel>
          <Down />
        </NavItem>
      </Sidebar>
      <Main>
        <Card>
          <CardHead>
            <Title>Source of emails</Title>
            <Range>LAST 30 DAYS</Range>
          </CardHead>
          <Tabs>
            <Tab $active>ALL MAIL</Tab>
            <Tab>SUSPICIOUS MAIL</Tab>
          </Tabs>
          <Body>
            <MapSvg viewBox="688 351 1782 1060" aria-label="World map">
              <g stroke="#fff" strokeWidth="0.800" strokeLinejoin="round">
                {lands.map(([c, pts], i) => (
                  <polygon key={i} points={pts} fill={c} />
                ))}
              </g>
              <g stroke="#fff" strokeWidth="1" fill="none" strokeLinejoin="round">
                {africaLines.map((pts, i) => (
                  <polyline key={i} points={pts} />
                ))}
              </g>
            </MapSvg>
            <List>
              {countries.map(([code, name, count]) => (
                <Row key={code}>
                  <Flag code={code} />
                  <RowName>{name}</RowName>
                  <span>{count}</span>
                </Row>
              ))}
            </List>
          </Body>
        </Card>
      </Main>
    </Page>
  );
}
